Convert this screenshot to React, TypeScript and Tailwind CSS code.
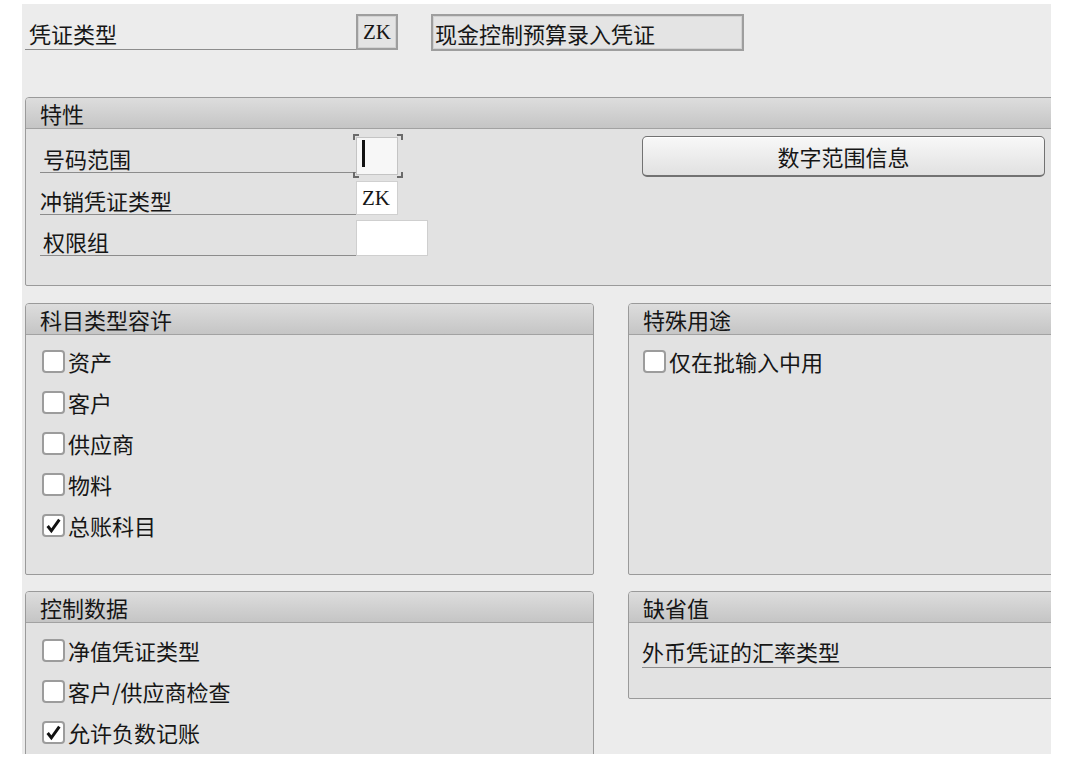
import React from "react";

function Group({
  title,
  className,
  bodyClass,
  children,
}: {
  title: string;
  className: string;
  bodyClass: string;
  children?: React.ReactNode;
}) {
  return (
    <div className={`border border-[#9a9a9a] rounded-t-[4px] rounded-b-[2px] bg-[#e2e2e2] shrink-0 ${className}`}>
      <div className="h-[31px] border-b border-[#a2a2a2] rounded-t-[3px] bg-linear-to-b from-[#dddddd] to-[#c5c5c5] pl-[14px] pt-[4px] leading-[22px]">
        {title}
      </div>
      <div className={bodyClass}>{children}</div>
    </div>
  );
}

function Check({ label, checked }: { label: string; checked?: boolean }) {
  return (
    <div className="h-[41px] flex items-center">
      <div className="w-[23px] h-[23px] shrink-0 bg-white border-2 border-[#9c9c9c] rounded-[4px] flex items-center justify-center">
        {checked && (
          <svg width="17" height="17" viewBox="0 0 16 16">
            <path d="M2.5 8.5 L6 13 L13.5 2.5" fill="none" stroke="#111" strokeWidth="2.8" />
          </svg>
        )}
      </div>
      <span className="ml-[3px] leading-[22px] -mt-[2px]">{label}</span>
    </div>
  );
}

export default function App() {
  return (
    <div className="w-[1084px] h-[772px] bg-white text-[22px] text-[#161616] font-['Noto_Sans_CJK_SC',sans-serif]">
      <div className="ml-[22px] pt-[4px]">
        <div className="w-[1029px] h-[750px] bg-[#ececec] overflow-hidden">
          {/* header row */}
          <div className="flex mt-[10px] ml-[3px] h-[36px]">
            <div className="w-[331px] h-[36px] border-b border-[#8c8c8c] pl-[4px] pt-[8px] leading-[22px]">
              凭证类型
            </div>
            <div className="w-[42px] h-[36px] bg-[#e4e4e4] border-2 border-[#9e9e9e] shadow-[inset_0_0_0_1px_#d2d2d2] flex items-center justify-center font-['Liberation_Serif',serif] text-[21px] leading-[21px]">
              ZK
            </div>
            <div className="ml-[33px] w-[313px] h-[37px] bg-[#e4e4e4] border-2 border-[#9e9e9e] shadow-[inset_0_0_0_1px_#d2d2d2] pl-[2px] pt-[6px] leading-[22px]">
              现金控制预算录入凭证
            </div>
          </div>

          {/* 特性 */}
          <Group title="特性" className="mt-[47px] ml-[3px] w-[1040px]" bodyClass="flex h-[156px]">
            <div className="w-[616px] pt-[2px] pl-[14px]">
              <div className="h-[42px] flex items-end">
                <div className="w-[316px] border-b border-[#8c8c8c] leading-[22px] pb-[3px] pl-[3px]">号码范围</div>
                <div className="relative w-[42px] h-[38px] mb-[-2px] bg-[#f7f7f7] border border-[#c4c4c4]">
                  <span className="absolute left-[5px] top-[2px] w-[3px] h-[27px] bg-[#111]" />
                  <span className="absolute -left-[4px] -top-[4px] w-[6px] h-[6px] border-t-2 border-l-2 border-[#6a6a6a]" />
                  <span className="absolute -right-[6px] -top-[4px] w-[6px] h-[6px] border-t-2 border-r-2 border-[#6a6a6a]" />
                  <span className="absolute -left-[4px] -bottom-[4px] w-[6px] h-[6px] border-b-2 border-l-2 border-[#6a6a6a]" />
                  <span className="absolute -right-[6px] -bottom-[4px] w-[6px] h-[6px] border-b-2 border-r-2 border-[#6a6a6a]" />
                </div>
              </div>
              <div className="h-[42px] flex items-end">
                <div className="w-[316px] border-b border-[#8c8c8c] leading-[22px] pb-[3px]">冲销凭证类型</div>
                <div className="w-[42px] h-[34px] bg-white border border-[#d0d0d0] pl-[5px] pt-[6px] font-['Liberation_Serif',serif] text-[21px] leading-[21px]">
                  ZK
                </div>
              </div>
              <div className="h-[41px] flex items-end">
                <div className="w-[316px] border-b border-[#8c8c8c] leading-[22px] pb-[3px] pl-[3px]">权限组</div>
                <div className="w-[72px] h-[36px] bg-white border border-[#cfcfcf]" />
              </div>
            </div>
            <div className="pt-[7px]">
              <div className="w-[403px] h-[41px] rounded-[5px] border border-[#727272] border-b-2 shadow-[inset_0_1px_0_#ffffff] bg-linear-to-b from-[#f8f8f8] to-[#e1e1e1] flex items-center justify-center leading-[22px]">
                数字范围信息
              </div>
            </div>
          </Group>

          {/* 科目类型容许 / 特殊用途 */}
          <div className="flex mt-[17px] ml-[3px]">
            <Group title="科目类型容许" className="w-[569px]" bodyClass="h-[239px] pt-[6px] pl-[16px]">
              <Check label="资产" />
              <Check label="客户" />
              <Check label="供应商" />
              <Check label="物料" />
              <Check label="总账科目" checked />
            </Group>
            <Group title="特殊用途" className="ml-[34px] w-[440px]" bodyClass="h-[239px] pt-[6px] pl-[14px]">
              <Check label="仅在批输入中用" />
            </Group>
          </div>

          {/* 控制数据 / 缺省值 */}
          <div className="flex items-start mt-[16px] ml-[3px]">
            <Group title="控制数据" className="w-[569px]" bodyClass="h-[200px] pt-[7px] pl-[16px]">
              <Check label="净值凭证类型" />
              <Check label="客户/供应商检查" />
              <Check label="允许负数记账" checked />
            </Group>
            <Group title="缺省值" className="ml-[34px] w-[440px]" bodyClass="h-[73px] pl-[13px]">
              <div className="mt-[2px] pt-[15px] pb-[5px] border-b border-[#8c8c8c] leading-[22px]">
                外币凭证的汇率类型
              </div>
            </Group>
          </div>
        </div>
      </div>
    </div>
  );
}
